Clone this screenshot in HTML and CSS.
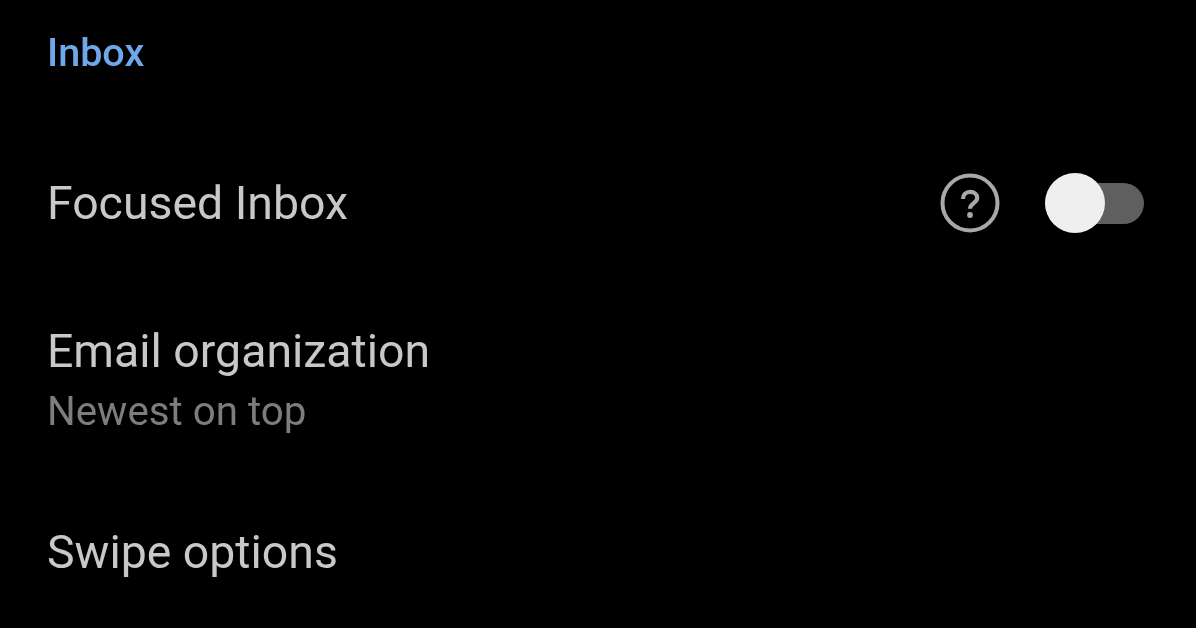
FILE: index.html
```html
<!DOCTYPE html>
<html>
<head>
    <title>Inbox settings</title>
    <link rel="stylesheet" href="styles.css">
</head>
<body>
    <h2 class="section-title">Inbox</h2>
    <div class="row row-focused">
        <div class="row-label">Focused Inbox</div>
        <div class="row-controls">
            <svg class="help-icon" viewBox="0 0 60 60" fill="none" stroke="currentColor">
                <circle cx="30" cy="30" r="27.5" stroke-width="4"/>
                <path d="M23 26c0-4.300 3-7.200 7.200-7.200 4 0 7 2.600 7 6.200 0 5-7.200 5.300-7.200 10.800" stroke-width="4.200"/>
                <circle cx="30" cy="42" r="2.900" fill="currentColor" stroke="none"/>
            </svg>
            <div class="toggle">
                <div class="toggle-knob"></div>
            </div>
        </div>
    </div>
    <div class="row row-email">
        <div class="row-label">Email organization</div>
        <div class="row-sub">Newest on top</div>
    </div>
    <div class="row row-swipe">
        <div class="row-label">Swipe options</div>
    </div>
</body>
</html>
```

FILE: styles.css
```css
body {
    margin: 0;
    width: 1196px;
    height: 628px;
    overflow: hidden;
    background-color: #000000;
    font-family: Roboto, "Liberation Sans", sans-serif;
    filter: blur(0.7px);
}
.section-title {
    margin: 0;
    padding: 30px 47px 0;
    height: 45px;
    line-height: 45px;
    font-size: 39.500px;
    font-weight: 500;
    color: #6fa8ea;
}
.row {
    padding: 0 52px 0 47px;
}
.row-focused {
    display: flex;
    align-items: center;
    justify-content: space-between;
    margin-top: 96px;
    height: 64px;
}
.row-email {
    margin-top: 88px;
}
.row-swipe {
    margin-top: 89px;
}
.row-label {
    font-size: 46.400px;
    line-height: 56px;
    color: #c8c8c8;
}
.row-sub {
    margin-top: 10px;
    font-size: 40.300px;
    line-height: 46px;
    color: #7d7d7d;
}
.row-controls {
    display: flex;
    align-items: center;
    gap: 45px;
}
.help-icon {
    width: 60px;
    height: 60px;
    color: #a8a8a8;
}
.toggle {
    position: relative;
    width: 99px;
    height: 41px;
    border-radius: 21px;
    background-color: #5f5f5f;
}
.toggle-knob {
    position: absolute;
    top: -10px;
    left: 0;
    width: 60px;
    height: 60px;
    border-radius: 50%;
    background-color: #efefef;
}
```
